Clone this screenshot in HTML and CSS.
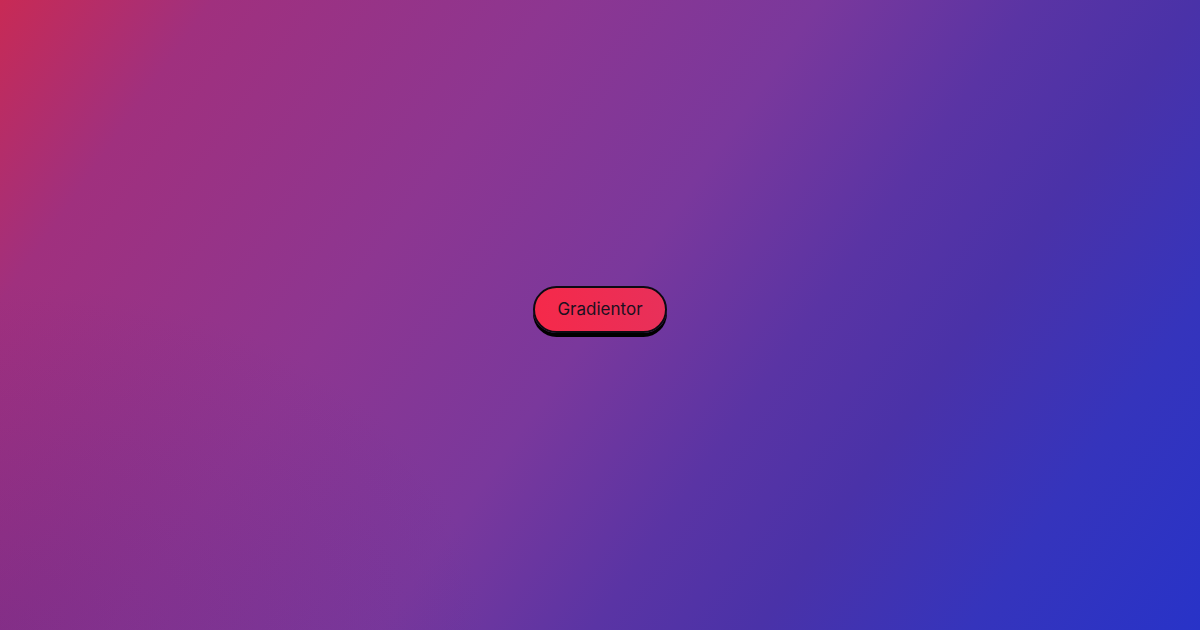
FILE: index.html
```html
<!DOCTYPE html>
<html lang="en">
<head>
<meta charset="utf-8">
<title>Gradientor</title>
<link rel="stylesheet" href="styles.css">
</head>
<body>
<main class="stage">
  <button class="pill" type="button">Gradientor</button>
</main>
</body>
</html>
```
FILE: styles.css
```css
html, body {
  margin: 0;
  padding: 0;
  height: 100%;
}
body {
  font-family: Inter, "Noto Sans", "Liberation Sans", sans-serif;
}
.stage {
  width: 1200px;
  height: 630px;
  display: flex;
  align-items: center;
  justify-content: center;
  background:
    radial-gradient(ellipse 700px 500px at 0% 100%, rgba(60, 20, 120, 0.18), rgba(60, 20, 120, 0) 70%),
    linear-gradient(125deg, #c82a55 0%, #a0307e 13%, #8d3691 34%, #7a389c 50%, #5a34a4 63%, #4a32a8 73%, #3534bc 86%, #2833c8 100%);
}
.pill {
  font-family: Inter, "Noto Sans", "Liberation Sans", sans-serif;
  font-size: 17px;
  line-height: 21px;
  color: #1b1020;
  padding: 11px 22px;
  border: 2px solid #0d0a12;
  border-radius: 999px;
  background: linear-gradient(90deg, #f5294a, #e8305a);
  box-shadow: 0 4px 0 #000;
  margin-bottom: 12px;
  cursor: pointer;
}
```
